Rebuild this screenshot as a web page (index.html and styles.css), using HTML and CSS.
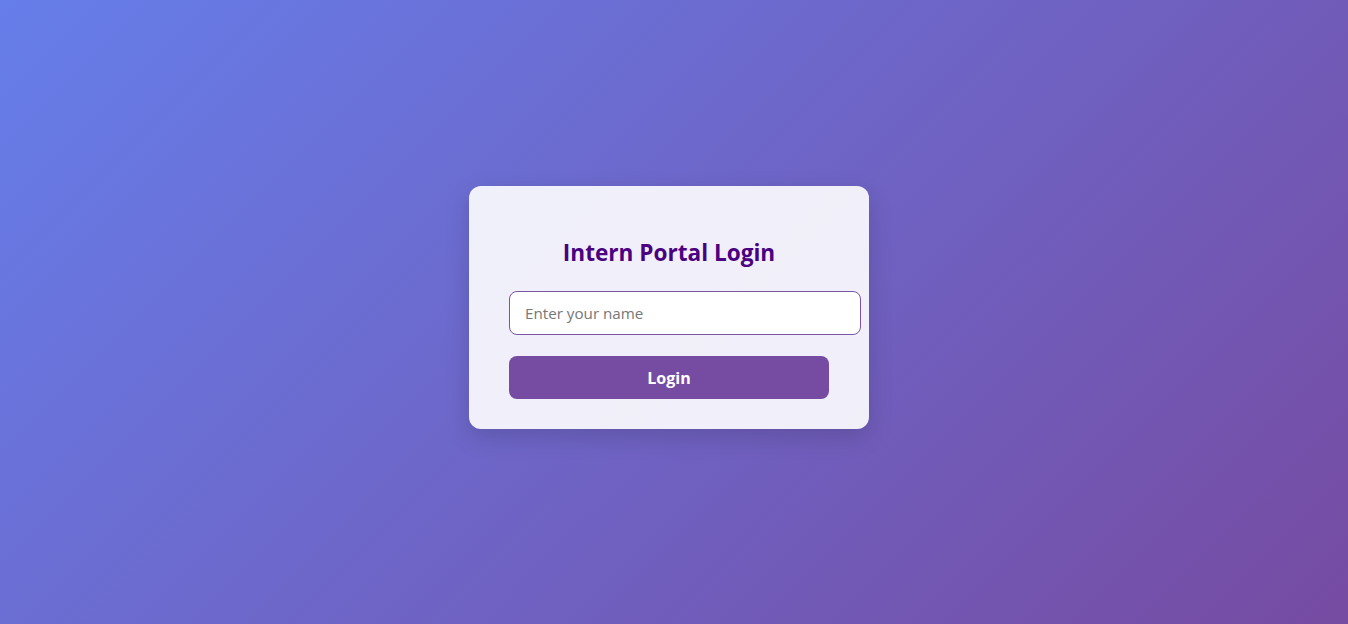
FILE: index.html
```html
<!DOCTYPE html>
<html lang="en">
<head>
<meta charset="utf-8">
<title>Intern Portal Login</title>
<link rel="stylesheet" href="styles.css">
</head>
<body>
<div class="card">
  <h2 class="title">Intern Portal Login</h2>
  <input class="name-input" type="text" placeholder="Enter your name">
  <button class="login-btn" type="button">Login</button>
</div>
</body>
</html>
```
FILE: styles.css
```css
html, body {
  margin: 0;
  height: 100%;
}
body {
  font-family: "Open Sans", "Noto Sans", sans-serif;
  background: linear-gradient(135deg, #667eea 0%, #764ba2 100%);
  display: flex;
  align-items: center;
  justify-content: center;
  padding: 0 10px 9px 0;
  box-sizing: border-box;
}
.card {
  width: 320px;
  padding: 30px 40px;
  background: rgba(255, 255, 255, 0.9);
  border-radius: 12px;
  box-shadow: 0 8px 24px rgba(0, 0, 0, 0.15);
  text-align: center;
}
.title {
  margin: 22px 0 24px;
  font-size: 22.6px;
  line-height: 29px;
  font-weight: 700;
  color: #4b0082;
}
.name-input {
  display: block;
  width: 320px;
  padding: 12px 15px;
  font-family: inherit;
  font-size: 15.2px;
  line-height: 18px;
  border: 1px solid #7a55a4;
  border-radius: 8px;
  background: #fff;
  color: #333;
  outline: none;
}
.name-input::placeholder {
  color: #777;
}
.login-btn {
  display: block;
  width: 320px;
  height: 43px;
  margin-top: 21px;
  border: none;
  border-radius: 8px;
  background: #764ba2;
  color: #fff;
  font-family: inherit;
  font-size: 16px;
  font-weight: 700;
  cursor: pointer;
}
```
